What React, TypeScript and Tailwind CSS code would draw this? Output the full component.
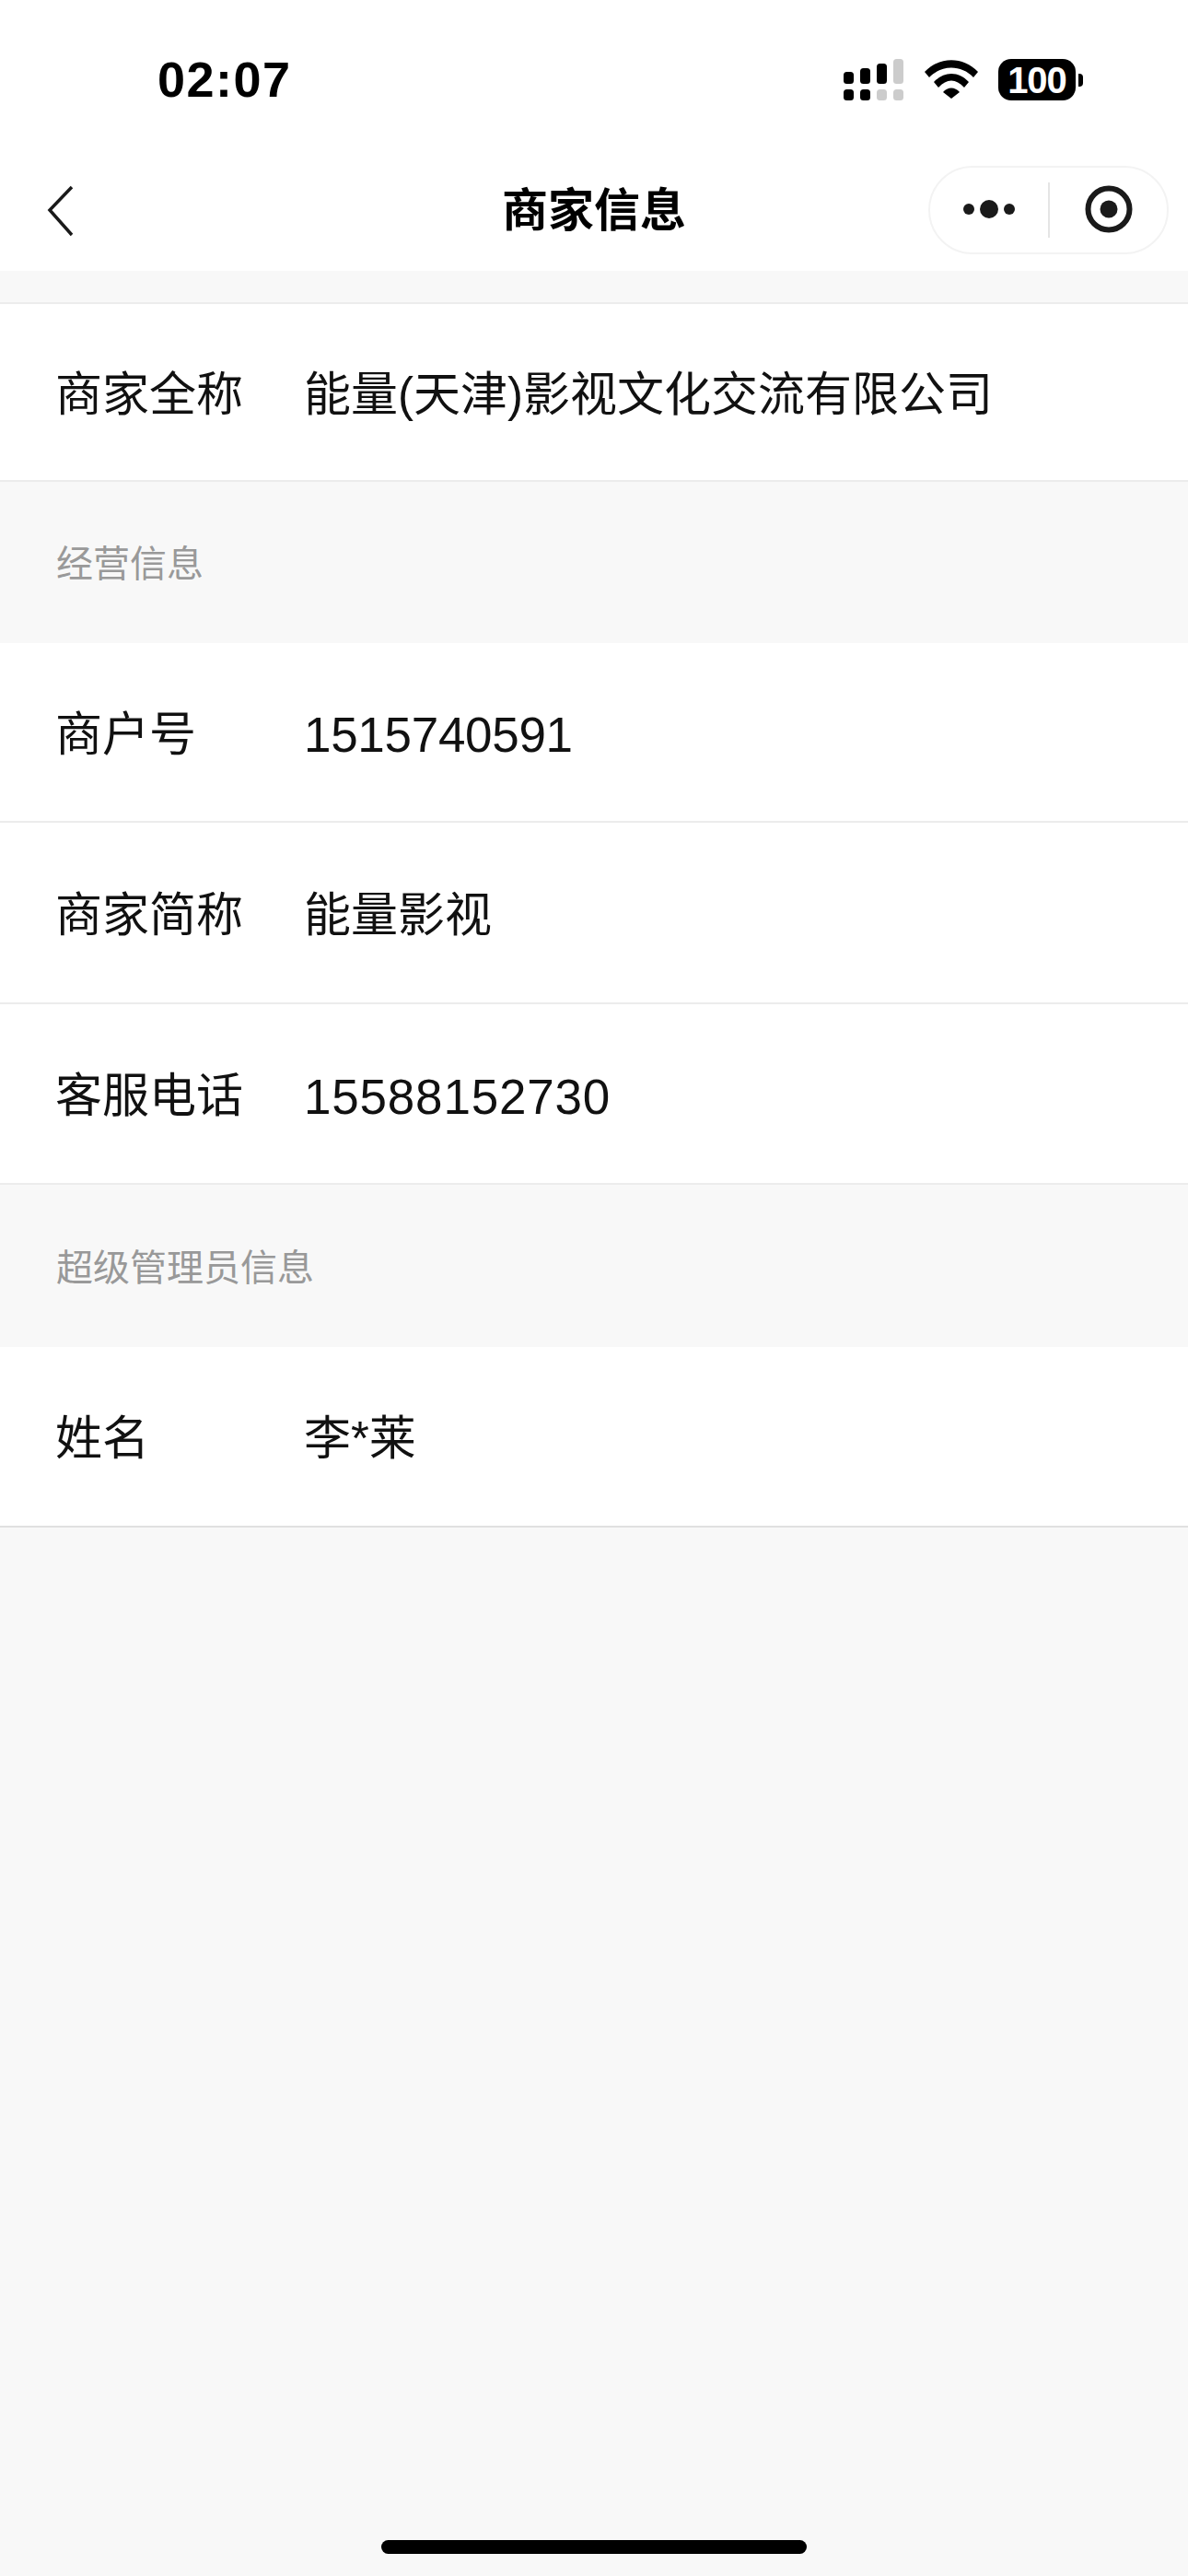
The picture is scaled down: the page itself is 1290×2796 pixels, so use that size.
import React from 'react';

const font = { fontFamily: '"Liberation Sans", "Noto Sans CJK SC", sans-serif' };

function InfoRow({ label, value, rowClass, valueClass }: { label: string; value: string; rowClass: string; valueClass?: string }) {
  return (
    <div className={`flex items-center ${rowClass} pl-[60px] pt-[7px] bg-white border-b-2 text-[51px] text-[#111111]`}>
      <div className="w-[270px] shrink-0">{label}</div>
      <div className={valueClass}>{value}</div>
    </div>
  );
}

function SectionTitle({ height, children }: { height: string; children: React.ReactNode }) {
  return (
    <div className={`flex items-center ${height} pl-[61px] pt-[3px] text-[40px] text-[#999999]`}>{children}</div>
  );
}

function StatusIcons() {
  return (
    <div className="flex items-start">
      <svg width="66" height="46" viewBox="0 0 66 46" className="mr-[22px]">
        <rect x="0" y="14" width="11" height="13" rx="3.5" fill="#000" />
        <rect x="18" y="10" width="11" height="17" rx="3.5" fill="#000" />
        <rect x="36" y="5" width="11" height="22" rx="3.5" fill="#000" />
        <rect x="54" y="0" width="11" height="27" rx="3.5" fill="#cccccc" />
        <rect x="0" y="33" width="11" height="12" rx="3.5" fill="#000" />
        <rect x="18" y="33" width="11" height="12" rx="3.5" fill="#000" />
        <rect x="36" y="33" width="11" height="12" rx="3.5" fill="#cccccc" />
        <rect x="54" y="33" width="11" height="12" rx="3.5" fill="#cccccc" />
      </svg>
      <svg width="58" height="44" viewBox="0 0 58 44" className="mr-[22px]">
        <path d="M0 14 C16 -3 42 -3 58 14 L53 20 C40 6 18 6 5 20 Z" fill="#000" />
        <path d="M10 25 C21 13 37 13 48 25 L43 31 C34 21 24 21 15 31 Z" fill="#000" />
        <path d="M20 36 C25 30 33 30 38 36 L29 43 Z" fill="#000" />
      </svg>
      <div className="flex items-center">
        <div className="flex items-center justify-center w-[84px] h-[45px] rounded-[14px] bg-black text-white text-[40px] font-bold tracking-[-1px] leading-none">100</div>
        <div className="ml-[3px] w-[5px] h-[14px] rounded-r-[4px] bg-black" />
      </div>
    </div>
  );
}

export default function App() {
  return (
    <div className="flex flex-col min-h-[2796px] bg-[#f8f8f8]" style={font}>
      {/* status bar */}
      <div className="flex justify-between h-[176px] bg-white pl-[171px] pr-[114px]">
        <div className="pt-[55px] text-[54px] leading-[62px] font-bold tracking-[1.5px] text-black">02:07</div>
        <div className="pt-[64px]"><StatusIcons /></div>
      </div>

      {/* nav */}
      <div className="grid grid-cols-[1fr_auto_1fr] h-[118px] bg-white">
        <div className="pl-[49px] pt-[25px]">
          <svg width="34" height="56" viewBox="0 0 34 56">
            <path d="M29 2 L5 27 L29 54" fill="none" stroke="#1a1a1a" strokeWidth="3.5" />
          </svg>
        </div>
        <div className="pt-[27px] text-[50px] leading-[52px] font-bold text-black">商家信息</div>
        <div className="flex justify-end items-start pt-[4px] pr-[21px]">
          <div className="flex items-center w-[261px] h-[96px] rounded-full border-2 border-[#f3f3f3]">
            <svg width="128" height="60" viewBox="0 0 128 60" className="shrink-0">
              <circle cx="42" cy="29" r="6" fill="#1a1a1a" />
              <circle cx="64" cy="29" r="10" fill="#1a1a1a" />
              <circle cx="86" cy="29" r="6" fill="#1a1a1a" />
            </svg>
            <div className="w-[2px] h-[60px] shrink-0 bg-[#e5e5e5]" />
            <svg width="127" height="60" viewBox="0 0 127 60" className="shrink-0">
              <circle cx="64" cy="29" r="22.5" fill="none" stroke="#1a1a1a" strokeWidth="6" />
              <circle cx="64" cy="29" r="9.5" fill="#1a1a1a" />
            </svg>
          </div>
        </div>
      </div>

      {/* content */}
      <div className="h-[36px] border-b-2 border-[#ececec]" />
      <InfoRow rowClass="h-[193px] border-[#ececec]" label="商家全称" value="能量(天津)影视文化交流有限公司" />
      <SectionTitle height="h-[175px]">经营信息</SectionTitle>
      <InfoRow rowClass="h-[195px] border-[#ececec]" label="商户号" value="1515740591" valueClass="text-[53px] tracking-[-0.3px]" />
      <InfoRow rowClass="h-[197px] border-[#ececec]" label="商家简称" value="能量影视" />
      <InfoRow rowClass="h-[196px] border-[#ececec]" label="客服电话" value="15588152730" valueClass="text-[53px] tracking-[0.8px]" />
      <SectionTitle height="h-[176px]">超级管理员信息</SectionTitle>
      <InfoRow rowClass="h-[196px] border-[#e0e0e0]" label="姓名" value="李*莱" />

      {/* home indicator */}
      <div className="mt-auto flex justify-center pb-[24px]">
        <div className="w-[462px] h-[15px] rounded-full bg-black" />
      </div>
    </div>
  );
}
